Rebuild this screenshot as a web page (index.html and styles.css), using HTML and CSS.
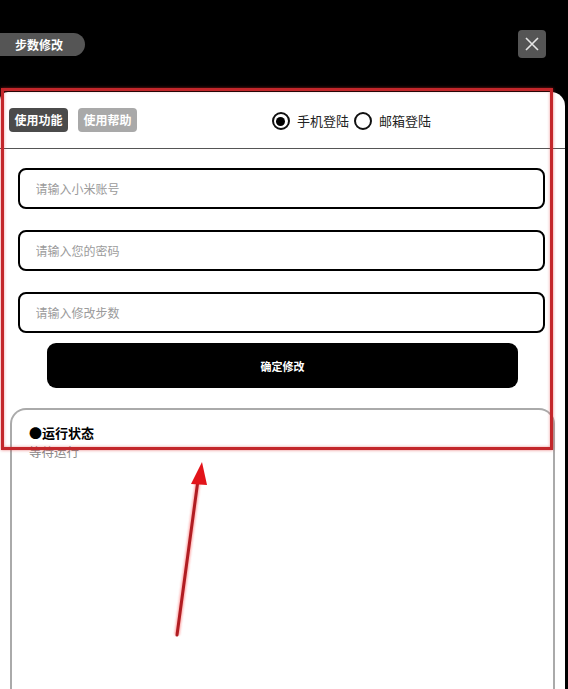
FILE: index.html
```html
<!DOCTYPE html>
<html lang="zh">
<head>
<meta charset="utf-8">
<title>步数修改</title>
<link rel="stylesheet" href="styles.css">
</head>
<body>
<div class="page">
  <header class="topbar">
    <div class="title-pill">步数修改</div>
    <button class="close-btn" aria-label="关闭">
      <svg width="14" height="14" viewBox="0 0 14 14"><path d="M1 1 L13 13 M13 1 L1 13" stroke="#e6e6e6" stroke-width="1.6" fill="none"/></svg>
    </button>
  </header>
  <main class="panel">
    <div class="tabs-row">
      <div class="tab tab-active">使用功能</div>
      <div class="tab tab-muted">使用帮助</div>
      <div class="radio-group">
        <span class="radio checked"></span><span class="radio-label">手机登陆</span>
        <span class="radio"></span><span class="radio-label">邮箱登陆</span>
      </div>
    </div>
    <div class="form">
      <input class="field" type="text" placeholder="请输入小米账号">
      <input class="field" type="password" placeholder="请输入您的密码">
      <input class="field" type="text" placeholder="请输入修改步数">
      <button class="submit">确定修改</button>
    </div>
    <section class="status">
      <div class="status-title">●运行状态</div>
      <div class="status-text">等待运行</div>
    </section>
  </main>
  <div class="annot-box"></div>
  <svg class="annot-arrow" width="568" height="689" viewBox="0 0 568 689">
    <defs>
      <filter id="glow" x="-50%" y="-50%" width="200%" height="200%">
        <feGaussianBlur stdDeviation="1.2"/>
      </filter>
    </defs>
    <g filter="url(#glow)" opacity="0.45">
      <line x1="177" y1="635" x2="198" y2="480" stroke="#ff3030" stroke-width="5"/>
    </g>
    <line x1="177" y1="635" x2="198" y2="480" stroke="#b01d22" stroke-width="3" stroke-linecap="round"/>
    <polygon points="202,462 191,484 207,485" fill="#e2141a"/>
  </svg>
</div>
</body>
</html>
```

FILE: styles.css
```css
* { box-sizing: border-box; }

html, body {
  margin: 0;
  padding: 0;
  background: #000;
}

body {
  font-family: "Noto Sans CJK SC", "Noto Sans", sans-serif;
  width: 568px;
  height: 689px;
  overflow: hidden;
}

.page {
  position: relative;
  width: 568px;
  height: 689px;
  display: flex;
  flex-direction: column;
}

.topbar {
  height: 92px;
  flex: none;
  display: flex;
  justify-content: space-between;
  align-items: flex-start;
  padding: 30px 22px 0 0;
}

.title-pill {
  margin-top: 3px;
  width: 85px;
  height: 23px;
  background: #555;
  color: #fff;
  font-size: 12px;
  font-weight: 700;
  line-height: 23px;
  padding-left: 15px;
  border-radius: 0 12px 12px 0;
}

.close-btn {
  width: 28px;
  height: 28px;
  border: none;
  padding: 0;
  background: #555;
  border-radius: 4px;
  display: flex;
  align-items: center;
  justify-content: center;
}

.panel {
  flex: 1;
  margin-right: 3px;
  background: #fff;
  border-radius: 8px 14px 0 0;
  overflow: hidden;
  display: flex;
  flex-direction: column;
}

.tabs-row {
  height: 57px;
  flex: none;
  display: flex;
  align-items: flex-start;
  padding: 16px 0 0 9px;
  border-bottom: 1px solid #555;
}

.tab {
  width: 59px;
  height: 24px;
  border-radius: 4px;
  color: #fff;
  font-size: 12px;
  font-weight: 700;
  line-height: 24px;
  text-align: center;
}

.tab + .tab { margin-left: 10px; }

.tab-active { background: #4b4b4b; }
.tab-muted { background: #a9a9a9; }

.radio-group {
  margin: 4px auto 0;
  display: flex;
  align-items: center;
  height: 18px;
  padding-left: 6px;
}

.radio {
  width: 18px;
  height: 18px;
  border: 2px solid #111;
  border-radius: 50%;
  display: flex;
  align-items: center;
  justify-content: center;
}

.radio.checked::after {
  content: "";
  width: 9px;
  height: 9px;
  border-radius: 50%;
  background: #000;
}

.radio-label {
  font-size: 13px;
  color: #222;
  margin: 0 5px 0 7px;
  line-height: 18px;
}

.form {
  flex: none;
  display: flex;
  flex-direction: column;
  padding: 19px 20px 0 18px;
}

.field {
  height: 41px;
  border: 2.5px solid #000;
  border-radius: 8px;
  padding: 0 15.5px;
  font-family: inherit;
  font-size: 12px;
  color: #333;
  background: #fff;
  outline: none;
}

.field + .field { margin-top: 21px; }

.field::placeholder { color: #9b9b9b; }

.submit {
  margin: 10px 27px 0 29px;
  height: 45px;
  border: none;
  border-radius: 9px;
  background: #000;
  color: #fff;
  font-family: inherit;
  font-size: 11px;
  font-weight: 700;
}

.status {
  flex: 1;
  margin: 20px 10px 0 10px;
  border: 2px solid #aaa;
  border-bottom: none;
  border-radius: 16px 16px 0 0;
  padding: 13px 0 0 17px;
  display: flex;
  flex-direction: column;
  gap: 0;
}

.status-title {
  font-size: 13px;
  font-weight: 700;
  color: #000;
  line-height: 19px;
}

.status-text {
  font-size: 12.5px;
  color: #8a8a8a;
  line-height: 19px;
}

.annot-box {
  position: absolute;
  left: 1px;
  top: 88px;
  width: 552px;
  height: 362px;
  border: 3px solid #c3272b;
  box-shadow: 0 0 3px rgba(220, 40, 40, 0.6), inset 0 0 3px rgba(220, 40, 40, 0.5);
  pointer-events: none;
}

.annot-arrow {
  position: absolute;
  left: 0;
  top: 0;
  pointer-events: none;
}
```
